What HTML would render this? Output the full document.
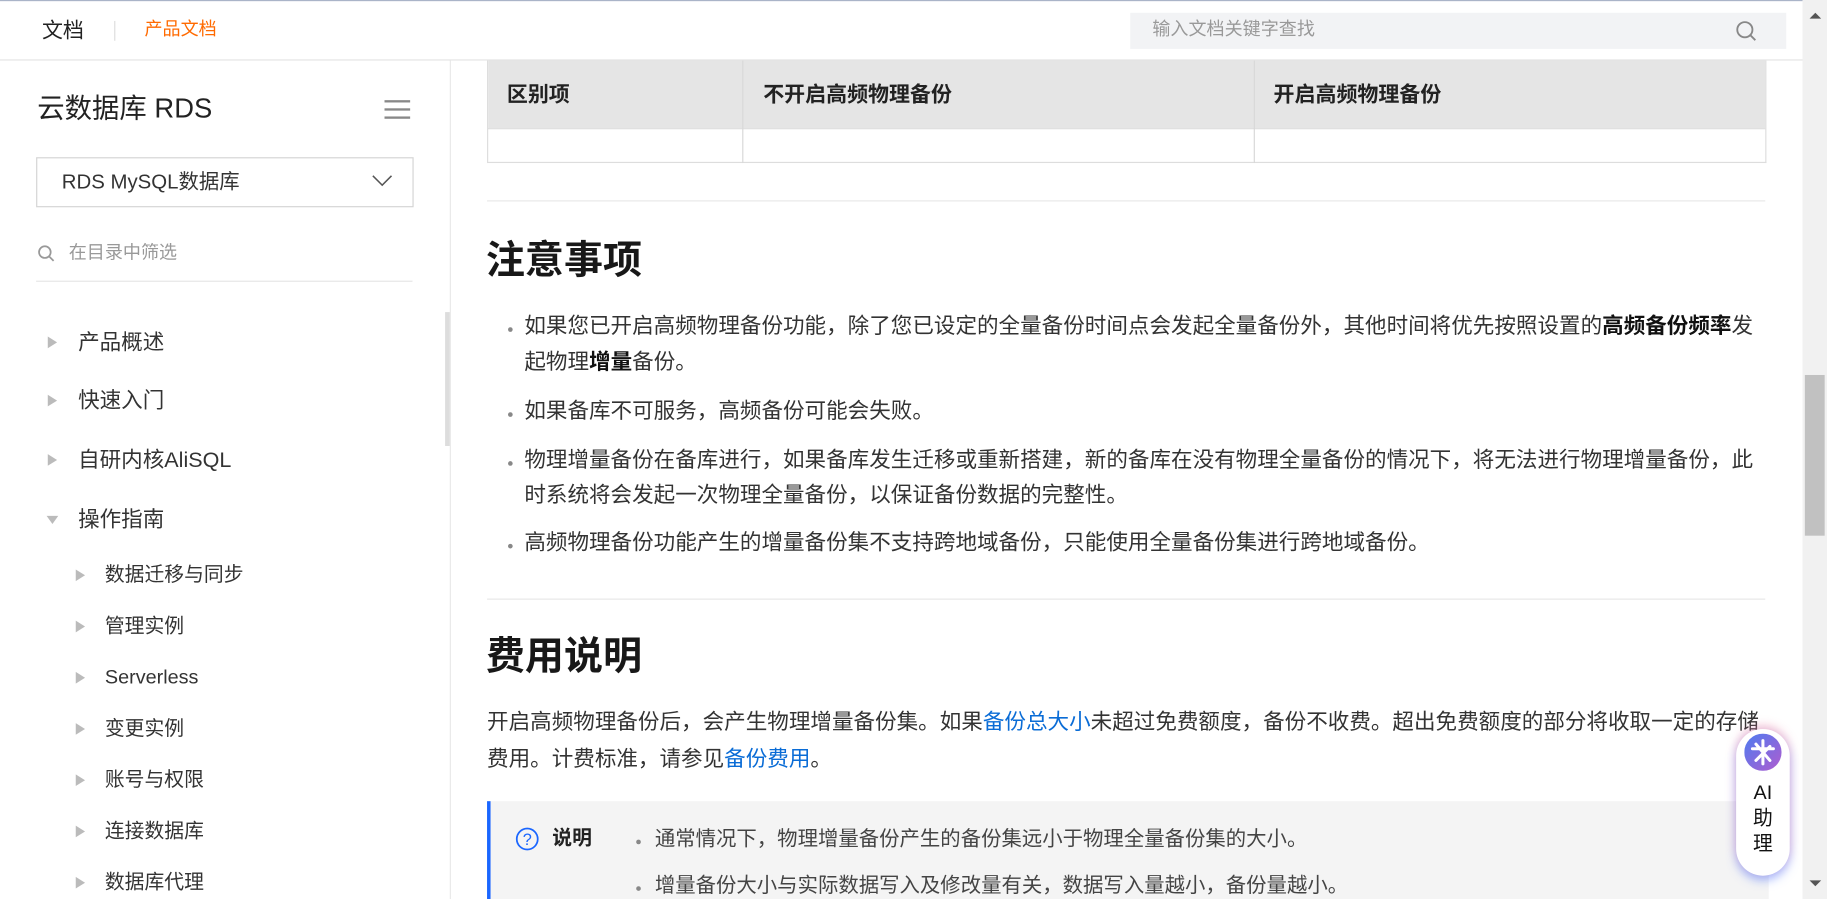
<!DOCTYPE html>
<html><head><meta charset="utf-8"><style>
html,body{margin:0;padding:0;width:1827px;height:899px;overflow:hidden;background:#fff}
#w{position:absolute;left:0;top:0;width:1568px;height:772px;transform:scale(1.16518,1.16451);transform-origin:0 0;font-family:"Liberation Sans","Noto Sans CJK SC",sans-serif;color:#333}
.a{position:absolute;white-space:nowrap;line-height:24px}
.tri{position:absolute;width:0;height:0;border-top:5px solid transparent;border-bottom:5px solid transparent;border-left:8px solid #bbb}
.l1{font-size:18.5px;color:#333}
.l2{font-size:17px;color:#333}
.p{font-size:18.5px;color:#333}
.dot{position:absolute;width:4px;height:4px;border-radius:2px;background:#888}
b{color:#111}
a{color:#0a6cd6;text-decoration:none}
</style></head><body><div id="w">
<div class="a" style="left:0;top:0;width:1547px;height:1px;background:#aab4c8"></div>
<div class="a" style="left:0;top:51px;width:1547px;height:1px;background:#e3e3e3"></div>
<div class="a" style="left:36px;top:14px;font-size:18px;color:#222">文档</div>
<div class="a" style="left:98px;top:18px;width:1px;height:17px;background:#ddd"></div>
<div class="a" style="left:124px;top:14px;font-size:15.5px;color:#ff6a00">产品文档</div>
<div class="a" style="left:970px;top:11px;width:563px;height:31px;background:#f2f3f5"></div>
<div class="a" style="left:989px;top:14px;font-size:15.5px;color:#999">输入文档关键字查找</div>
<svg class="a" style="left:1489px;top:17px" width="20" height="20"><circle cx="8.5" cy="8.5" r="6.5" fill="none" stroke="#888" stroke-width="1.6"/><path d="M13 13l4.5 4.5" stroke="#888" stroke-width="1.6"/></svg>
<div class="a" style="left:1547px;top:0;width:21px;height:772px;background:#f1f1f1"></div>
<div class="a" style="left:1549px;top:322px;width:17px;height:138px;background:#c1c1c1"></div>
<div class="a" style="left:1553px;top:11px;border-left:5px solid transparent;border-right:5px solid transparent;border-bottom:5px solid #555;line-height:0"></div>
<div class="a" style="left:1553px;top:756px;border-left:5px solid transparent;border-right:5px solid transparent;border-top:5px solid #555;line-height:0"></div>
<div class="a" style="left:386px;top:52px;width:1px;height:720px;background:#e8e8e8"></div>
<div class="a" style="left:382px;top:268px;width:4px;height:115px;background:#ddd"></div>
<div class="a" style="left:32px;top:79px;font-size:23.5px;line-height:28px;color:#222">云数据库 RDS</div>
<div class="a" style="left:330px;top:86px;width:22px;height:2px;background:#888"></div>
<div class="a" style="left:330px;top:93px;width:22px;height:2px;background:#888"></div>
<div class="a" style="left:330px;top:100px;width:22px;height:2px;background:#888"></div>
<div class="a" style="left:31px;top:135px;width:322px;height:41px;border:1px solid #d4d4d4"></div>
<div class="a" style="left:53px;top:144px;font-size:17.5px;color:#333">RDS MySQL数据库</div>
<svg class="a" style="left:319px;top:149px" width="18" height="12"><path d="M1 2l8 8 8-8" fill="none" stroke="#555" stroke-width="1.3"/></svg>
<svg class="a" style="left:32px;top:210px" width="16" height="16"><circle cx="6.5" cy="6.5" r="5" fill="none" stroke="#999" stroke-width="1.5"/><path d="M10 10l4 4" stroke="#999" stroke-width="1.5"/></svg>
<div class="a" style="left:59px;top:206px;font-size:15.5px;color:#999">在目录中筛选</div>
<div class="a" style="left:31px;top:241px;width:323px;height:1px;background:#e5e5e5"></div>
<div class="tri" style="left:41px;top:289px"></div><div class="a l1" style="left:67px;top:282px">产品概述</div>
<div class="tri" style="left:41px;top:339px"></div><div class="a l1" style="left:67px;top:332px">快速入门</div>
<div class="tri" style="left:41px;top:390px"></div><div class="a l1" style="left:67px;top:383px">自研内核AliSQL</div>
<div class="a" style="left:40px;top:443px;border-left:5px solid transparent;border-right:5px solid transparent;border-top:7px solid #bbb;line-height:0"></div><div class="a l1" style="left:67px;top:434px">操作指南</div>
<div class="tri" style="left:65px;top:489px"></div><div class="a l2" style="left:90px;top:482px">数据迁移与同步</div>
<div class="tri" style="left:65px;top:533px"></div><div class="a l2" style="left:90px;top:526px">管理实例</div>
<div class="tri" style="left:65px;top:577px"></div><div class="a l2" style="left:90px;top:570px">Serverless</div>
<div class="tri" style="left:65px;top:621px"></div><div class="a l2" style="left:90px;top:614px">变更实例</div>
<div class="tri" style="left:65px;top:665px"></div><div class="a l2" style="left:90px;top:658px">账号与权限</div>
<div class="tri" style="left:65px;top:709px"></div><div class="a l2" style="left:90px;top:702px">连接数据库</div>
<div class="tri" style="left:65px;top:753px"></div><div class="a l2" style="left:90px;top:746px">数据库代理</div>
<div class="a" style="left:418px;top:52px;width:1096px;height:87px;border:1px solid #ddd;border-top:none"></div>
<div class="a" style="left:419px;top:52px;width:1096px;height:58px;background:#e5e5e5"></div>
<div class="a" style="left:418px;top:110px;width:1097px;height:1px;background:#ddd"></div>
<div class="a" style="left:637px;top:52px;width:1px;height:88px;background:#d8d8d8"></div>
<div class="a" style="left:1076px;top:52px;width:1px;height:88px;background:#d8d8d8"></div>
<div class="a" style="left:435px;top:69px;font-size:18px;font-weight:bold;color:#222">区别项</div>
<div class="a" style="left:655px;top:69px;font-size:18px;font-weight:bold;color:#222">不开启高频物理备份</div>
<div class="a" style="left:1093px;top:69px;font-size:18px;font-weight:bold;color:#222">开启高频物理备份</div>
<div class="a" style="left:418px;top:172px;width:1097px;height:1px;background:#e8e8e8"></div>
<div class="a" style="left:417px;top:205px;font-size:33.5px;line-height:40px;font-weight:bold;color:#181818">注意事项</div>
<div class="dot" style="left:436px;top:281px"></div>
<div class="a p" style="left:450px;top:268px">如果您已开启高频物理备份功能，除了您已设定的全量备份时间点会发起全量备份外，其他时间将优先按照设置的<b>高频备份频率</b>发</div>
<div class="a p" style="left:450px;top:299px">起物理<b>增量</b>备份。</div>
<div class="dot" style="left:436px;top:354px"></div>
<div class="a p" style="left:450px;top:341px">如果备库不可服务，高频备份可能会失败。</div>
<div class="dot" style="left:436px;top:396px"></div>
<div class="a p" style="left:450px;top:383px">物理增量备份在备库进行，如果备库发生迁移或重新搭建，新的备库在没有物理全量备份的情况下，将无法进行物理增量备份，此</div>
<div class="a p" style="left:450px;top:413px">时系统将会发起一次物理全量备份，以保证备份数据的完整性。</div>
<div class="dot" style="left:436px;top:467px"></div>
<div class="a p" style="left:450px;top:454px">高频物理备份功能产生的增量备份集不支持跨地域备份，只能使用全量备份集进行跨地域备份。</div>
<div class="a" style="left:418px;top:514px;width:1097px;height:1px;background:#e8e8e8"></div>
<div class="a" style="left:417px;top:545px;font-size:33.5px;line-height:40px;font-weight:bold;color:#181818">费用说明</div>
<div class="a p" style="left:418px;top:608px">开启高频物理备份后，会产生物理增量备份集。如果<a>备份总大小</a>未超过免费额度，备份不收费。超出免费额度的部分将收取一定的存储</div>
<div class="a p" style="left:418px;top:640px">费用。计费标准，请参见<a>备份费用</a>。</div>
<div class="a" style="left:418px;top:688px;width:1097px;height:84px;background:#f4f4f4;border-left:3px solid #1a66ff"></div>
<svg class="a" style="left:442px;top:710px" width="21" height="21"><circle cx="10.5" cy="10.5" r="9" fill="none" stroke="#1a66ff" stroke-width="1.5"/><text x="10.5" y="15.5" font-size="14" text-anchor="middle" fill="#1a66ff" font-family="Liberation Sans">?</text></svg>
<div class="a" style="left:474px;top:708px;font-size:17px;font-weight:bold;color:#222">说明</div>
<div class="dot" style="left:546px;top:721px"></div>
<div class="a" style="left:562px;top:708px;font-size:17.5px;color:#444">通常情况下，物理增量备份产生的备份集远小于物理全量备份集的大小。</div>
<div class="dot" style="left:546px;top:761px"></div>
<div class="a" style="left:562px;top:748px;font-size:17.5px;color:#444">增量备份大小与实际数据写入及修改量有关，数据写入量越小，备份量越小。</div>
<div class="a" style="left:1490px;top:626px;width:46px;height:126px;border-radius:23px;background:#fff;box-shadow:0 -3px 8px rgba(230,120,160,.45),0 4px 8px rgba(80,120,255,.5)"></div>
<svg class="a" style="left:1497px;top:630px" width="32" height="32"><defs><linearGradient id="g" x1="0" y1="0" x2="1" y2="1"><stop offset="0" stop-color="#4d7cf0"/><stop offset="1" stop-color="#b05ccf"/></linearGradient></defs><circle cx="16" cy="16" r="16" fill="url(#g)"/><path d="M16 6v20M7 13h18M10 23l12-12M10 9l12 14" stroke="#fff" stroke-width="2.6" stroke-linecap="round"/></svg>
<div class="a" style="left:1503px;top:670px;font-size:17px;color:#111;line-height:22px;text-align:center;width:20px">AI<br>助<br>理</div>
</div></body></html>
